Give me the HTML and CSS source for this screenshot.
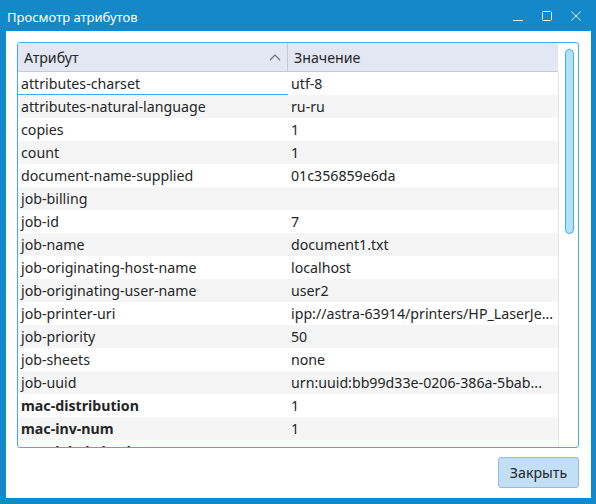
FILE: index.html
```html
<!DOCTYPE html>
<html>
<head>
<meta charset="utf-8">
<link rel="stylesheet" href="styles.css">
</head>
<body>
<div class="window">
  <div class="titlebar">
    <span class="title">Просмотр атрибутов</span>
    <div class="controls">
      <svg class="ctl" width="12" height="12" viewBox="0 0 12 12"><path d="M1 10.5h10" stroke="#e6eef5" stroke-width="1" fill="none"/></svg>
      <svg class="ctl" width="12" height="12" viewBox="0 0 12 12"><rect x="1.5" y="1.5" width="9" height="9" rx="1" stroke="#e6eef5" stroke-width="1" fill="none"/></svg>
      <svg class="ctl" width="12" height="12" viewBox="0 0 12 12"><path d="M1.5 1.5l9 9M10.5 1.5l-9 9" stroke="#e6eef5" stroke-width="1" fill="none"/></svg>
    </div>
  </div>
  <div class="client">
    <div class="frame">
      <div class="viewport">
        <div class="header">
          <div class="hcell first">Атрибут
            <svg class="sort" width="12" height="7" viewBox="0 0 12 7"><path d="M1 6l5-5 5 5" stroke="#6b7077" stroke-width="1.1" fill="none"/></svg>
          </div>
          <div class="hcell">Значение</div>
        </div>
        <div class="rows">
          <div class="row"><div class="cell first focus">attributes-charset</div><div class="cell">utf-8</div></div>
          <div class="row alt"><div class="cell first">attributes-natural-language</div><div class="cell">ru-ru</div></div>
          <div class="row"><div class="cell first">copies</div><div class="cell">1</div></div>
          <div class="row alt"><div class="cell first">count</div><div class="cell">1</div></div>
          <div class="row"><div class="cell first">document-name-supplied</div><div class="cell">01c356859e6da</div></div>
          <div class="row alt"><div class="cell first">job-billing</div><div class="cell"></div></div>
          <div class="row"><div class="cell first">job-id</div><div class="cell">7</div></div>
          <div class="row alt"><div class="cell first">job-name</div><div class="cell">document1.txt</div></div>
          <div class="row"><div class="cell first">job-originating-host-name</div><div class="cell">localhost</div></div>
          <div class="row alt"><div class="cell first">job-originating-user-name</div><div class="cell">user2</div></div>
          <div class="row"><div class="cell first">job-printer-uri</div><div class="cell">ipp://astra-63914/printers/HP_LaserJe...</div></div>
          <div class="row alt"><div class="cell first">job-priority</div><div class="cell">50</div></div>
          <div class="row"><div class="cell first">job-sheets</div><div class="cell">none</div></div>
          <div class="row alt"><div class="cell first">job-uuid</div><div class="cell">urn:uuid:bb99d33e-0206-386a-5bab...</div></div>
          <div class="row bold"><div class="cell first">mac-distribution</div><div class="cell">1</div></div>
          <div class="row alt bold"><div class="cell first">mac-inv-num</div><div class="cell">1</div></div>
          <div class="row bold"><div class="cell first">mac-label-check</div><div class="cell">1</div></div>
        </div>
      </div>
      <div class="scrollarea">
        <div class="handle"></div>
      </div>
    </div>
    <div class="buttons">
      <button class="btn">Закрыть</button>
    </div>
  </div>
</div>
</body>
</html>
```
FILE: styles.css
```css
html, body {
  margin: 0;
  padding: 0;
}
body {
  background: #1489c9;
  font-family: "Noto Sans", "Open Sans", sans-serif;
  font-size: 14.2px;
  color: #232627;
}
.window {
  width: 596px;
  height: 504px;
  display: flex;
  flex-direction: column;
  background: #1489c9;
}
.titlebar {
  height: 31px;
  display: flex;
  align-items: center;
  padding-left: 7px;
  padding-right: 14px;
  box-sizing: border-box;
  color: #ffffff;
  flex-shrink: 0;
}
.title {
  font-size: 13px;
  position: relative;
  top: 1px;
}
.controls {
  margin-left: auto;
  display: flex;
  gap: 17px;
  align-items: center;
}
.ctl {
  display: block;
}
.client {
  flex: 1;
  margin: 0 5px 6px 6px;
  background: #ffffff;
  padding: 11px 12px 10px 11px;
  display: flex;
  flex-direction: column;
  min-height: 0;
}
.frame {
  height: 406px;
  box-sizing: border-box;
  border: 1px solid #3daee9;
  border-radius: 3px;
  display: flex;
  overflow: hidden;
}
.viewport {
  width: 540px;
  overflow: hidden;
  display: flex;
  flex-direction: column;
}
.header {
  height: 29px;
  flex-shrink: 0;
  display: flex;
  background: #e3e7f3;
  border-bottom: 1px solid #c5c9d2;
  box-sizing: border-box;
}
.hcell {
  display: flex;
  align-items: center;
  padding-left: 6px;
  box-sizing: border-box;
  flex: 1;
}
.hcell.first {
  width: 270px;
  flex: 0 0 270px;
  border-right: 1px solid #c5c9d2;
  position: relative;
}
.sort {
  position: absolute;
  right: 6px;
  top: 11px;
}
.rows {
  display: flex;
  flex-direction: column;
}
.row {
  height: 23px;
  flex-shrink: 0;
  display: flex;
  align-items: stretch;
}
.row.alt {
  background: #f5f5f5;
}
.row.bold {
  font-weight: bold;
}
.cell {
  flex: 1;
  min-width: 0;
  padding: 0 3px 0 3px;
  display: flex;
  align-items: center;
  white-space: nowrap;
  overflow: hidden;
  box-sizing: border-box;
}
.cell:not(.first) {
  font-weight: normal;
}
.cell.first {
  flex: 0 0 270px;
}
.cell.focus {
  border-bottom: 1px solid #3daee9;
}
.scrollarea {
  flex: 1;
  border-left: 1px solid #e6e6e6;
  position: relative;
  margin-top: 29px;
}
.handle {
  position: absolute;
  left: 6px;
  top: -23px;
  width: 7px;
  height: 183px;
  background: #b3e2f8;
  border: 1px solid #3daee9;
  border-radius: 5px;
}
.buttons {
  display: flex;
  justify-content: flex-end;
  margin-top: 9px;
}
.btn {
  width: 81px;
  height: 31px;
  background: #c2dff5;
  border: 1px solid #93bde0;
  border-radius: 3px;
  font-family: "Noto Sans", "Open Sans", sans-serif;
  font-size: 14.2px;
  color: #232627;
  padding: 0;
}
```
